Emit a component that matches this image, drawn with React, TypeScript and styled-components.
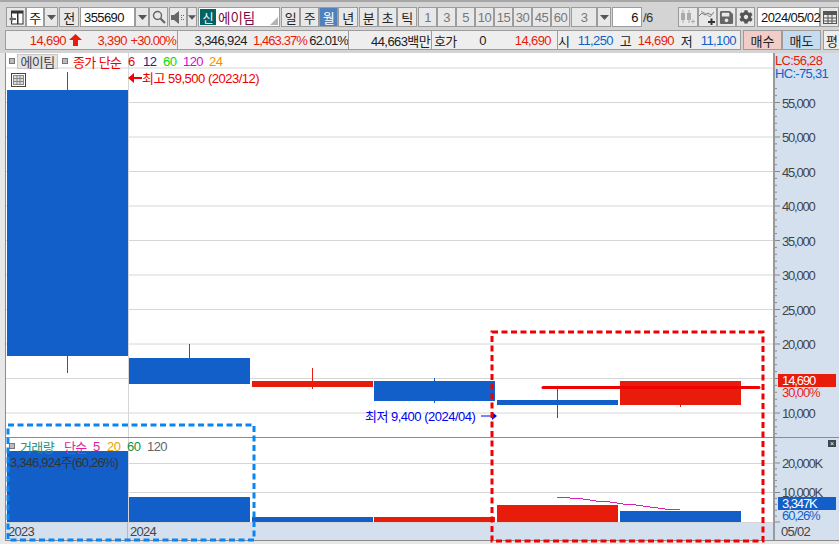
import styled, { createGlobalStyle } from "styled-components";
import { FaCog, FaSave } from "react-icons/fa";

const FONT = `"Liberation Sans", "Noto Sans CJK KR", sans-serif`;
const RED = "#e81c0a";
const BLUE = "#135fc9";
const AXIS_BG = "#d5e0ef";
const GRID = "#d6d6d6";

const candles = [
    { x: 7, w: 121, top: 90, bottom: 356, wickTop: 72, wickBottom: 373, up: false },
    { x: 129, w: 121, top: 358, bottom: 384, wickTop: 344, wickBottom: 384, up: false },
    { x: 252, w: 121, top: 381, bottom: 387, wickTop: 368, wickBottom: 389, up: true },
    { x: 374, w: 121, top: 381, bottom: 401, wickTop: 378, wickBottom: 403, up: false },
    { x: 497, w: 121, top: 400, bottom: 405, wickTop: 388, wickBottom: 418, up: false },
    { x: 620, w: 121, top: 381, bottom: 405, wickTop: 381, wickBottom: 407, up: true },
];

const volumes = [
    { x: 7, top: 451, up: false },
    { x: 129, top: 497, up: false },
    { x: 252, top: 517, up: false },
    { x: 374, top: 517, up: true },
    { x: 497, top: 505, up: true },
    { x: 620, top: 511, up: false },
];

const priceLabels = [55000, 50000, 45000, 40000, 35000, 30000, 25000, 20000, 15000, 10000];
const priceY = (price: number) => 413 - ((price - 10000) / 5000) * 34.5;

const GlobalStyle = createGlobalStyle`
    html, body {
        margin : 0;
        padding : 0;
        background : #d4d4d4;
    }
`;

const Page = styled.div`
    position : relative;
    width : 839px;
    height : 544px;
    overflow : hidden;
    display : flex;
    flex-direction : column;
    background : #d4d4d4;
    border-top : 2px solid #a6a6a6;
    box-sizing : border-box;
    font-family : ${FONT};
    font-size : 13px;
`;

const Toolbar = styled.div`
    display : flex;
    align-items : stretch;
    height : 20px;
    margin : 5px 0 0 6px;
`;

const ToolButton = styled.div<{ $w : number; $active? : boolean; $muted? : boolean; $gap? : number; $lead? : number }>`
    width : ${({ $w }) => $w}px;
    flex : none;
    margin-left : ${({ $lead }) => $lead ?? 0}px;
    margin-right : ${({ $gap }) => $gap ?? 0}px;
    box-sizing : border-box;
    display : flex;
    align-items : center;
    justify-content : center;
    border : 1px solid #9c9c9c;
    background : ${({ $active }) => ($active ? "#4f81bd" : "#e8e8e8")};
    color : ${({ $active, $muted }) => ($active ? "#fff" : $muted ? "#777" : "#222")};
    font-size : 13px;
    letter-spacing : -0.5px;
`;

const WhiteField = styled.div<{ $w : number; $align? : string; $gap? : number }>`
    width : ${({ $w }) => $w}px;
    flex : none;
    margin-right : ${({ $gap }) => $gap ?? 0}px;
    box-sizing : border-box;
    display : flex;
    align-items : center;
    justify-content : ${({ $align }) => $align ?? "flex-start"};
    padding : 0 3px;
    border : 1px solid #9c9c9c;
    background : #fff;
    color : #111;
    font-size : 13px;
    letter-spacing : -0.6px;
`;

const NameField = styled(WhiteField)`
    position : relative;
    padding : 0 0 0 1px;
    gap : 2px;
    font-size : 13.500px;
    letter-spacing : 0;
    color : #7a0840;
`;

const NewBadge = styled.span`
    width : 16px;
    height : 16px;
    display : flex;
    align-items : center;
    justify-content : center;
    background : #006464;
    color : #fff;
    font-size : 12px;
`;

const CornerMark = styled.span`
    position : absolute;
    right : 1px;
    bottom : 1px;
    width : 0;
    height : 0;
    border-left : 8px solid transparent;
    border-bottom : 8px solid #b4b4b4;
`;

const PageCount = styled.div`
    width : 35px;
    flex : none;
    display : flex;
    align-items : center;
    padding-left : 1px;
    color : #333;
    font-size : 13px;
    letter-spacing : -0.5px;
`;

const InfoBar = styled.div`
    display : flex;
    align-items : stretch;
    height : 20px;
    margin : 3px 0 0 5px;
`;

const InfoGroup = styled.div<{ $w : number; $gap? : number; $bg? : string; $center? : boolean; $flush? : boolean }>`
    width : ${({ $w }) => $w}px;
    flex : none;
    margin-left : ${({ $flush }) => ($flush ? 0 : -1)}px;
    margin-right : ${({ $gap }) => $gap ?? 0}px;
    box-sizing : border-box;
    display : flex;
    align-items : center;
    justify-content : ${({ $center }) => ($center ? "center" : "flex-start")};
    border : 1px solid #9c9c9c;
    background : ${({ $bg }) => $bg ?? "#eeeeee"};
    color : #222;
`;

const InfoText = styled.span<{ $w : number; $color? : string; $left? : boolean; $tight? : boolean }>`
    width : ${({ $w }) => $w}px;
    flex : none;
    box-sizing : border-box;
    padding-left : ${({ $left }) => ($left ? 2 : 0)}px;
    text-align : ${({ $left }) => ($left ? "left" : "right")};
    color : ${({ $color }) => $color ?? "#222"};
    font-size : 13px;
    letter-spacing : ${({ $tight }) => ($tight ? -0.9 : -0.6)}px;
    white-space : nowrap;
`;

const UpArrow = styled.svg`
    margin-left : 3px;
    flex : none;
`;

const ChartFrame = styled.div`
    margin : 3px 0 0 5px;
    display : flex;
    flex-direction : column;
    border-left : 1px solid #8c8c8c;
    background : #fff;
    height : 488px;
    flex : none;
    box-shadow : -5px 0 0 #e8e8e8;
`;

const Panel = styled.div<{ $h : number; $line? : boolean }>`
    position : relative;
    display : flex;
    height : ${({ $h }) => $h}px;
    flex : none;
    border-bottom : ${({ $line }) => ($line ? "1px solid #8c8c8c" : "none")};
    box-sizing : border-box;
`;

const PlotSvg = styled.svg`
    display : block;
    width : 767px;
    height : 100%;
    flex : none;
`;

const AxisSvg = styled.svg`
    display : block;
    width : 66px;
    height : 100%;
    flex : none;
    background : ${AXIS_BG};
    border-left : 2px solid #9a9a9a;
    box-sizing : border-box;
`;

const AxisLabel = styled.text`
    font-family : ${FONT};
    font-size : 13px;
    letter-spacing : -1.2px;
    fill : #444;
`;

const LegendRow = styled.div`
    position : absolute;
    left : 3px;
    top : 0;
    height : 16px;
    display : flex;
    align-items : center;
    font-size : 13px;
    letter-spacing : -0.6px;
`;

const LegendText = styled.span<{ $color : string; $w : number; $lead? : number }>`
    width : ${({ $w }) => $w}px;
    flex : none;
    margin-left : ${({ $lead }) => $lead ?? 0}px;
    color : ${({ $color }) => $color};
    white-space : nowrap;
`;

const Bullet = styled.span`
    width : 4px;
    height : 4px;
    flex : none;
    border : 1px solid #777;
    background : #bbb;
    margin-right : 2px;
`;

const NameChip = styled.span`
    width : 41px;
    height : 15px;
    flex : none;
    margin-right : 4px;
    display : flex;
    align-items : center;
    justify-content : center;
    background : #e4e4e4;
    border : 1px solid #c8c8c8;
    box-sizing : border-box;
    color : #444;
`;

const TableIcon = styled.svg`
    position : absolute;
    left : 5px;
    top : 20px;
`;

const Callout = styled.div<{ $color : string; $left : number; $top : number }>`
    position : absolute;
    left : ${({ $left }) => $left}px;
    top : ${({ $top }) => $top}px;
    display : flex;
    align-items : center;
    color : ${({ $color }) => $color};
    font-size : 13px;
    letter-spacing : -0.5px;
    white-space : nowrap;
`;

const LowArrow = styled.svg`
    margin-left : 6px;
    flex : none;
`;

const SubLegend = styled.div`
    position : absolute;
    left : 4px;
    top : 14px;
    color : #333;
    font-size : 13px;
    letter-spacing : -0.8px;
    white-space : nowrap;
`;

const AxisTag = styled.div<{ $top : number; $bg : string }>`
    position : absolute;
    left : 772px;
    top : ${({ $top }) => $top}px;
    width : 58px;
    height : 13px;
    padding-left : 4px;
    box-sizing : border-box;
    display : flex;
    align-items : center;
    background : ${({ $bg }) => $bg};
    color : #fff;
    font-size : 13px;
    letter-spacing : -1.1px;
`;

const AxisNote = styled.div<{ $top : number; $color : string; $left? : number; $tight? : boolean }>`
    position : absolute;
    left : ${({ $left }) => $left ?? 776}px;
    top : ${({ $top }) => $top}px;
    line-height : 13px;
    color : ${({ $color }) => $color};
    font-size : 13px;
    letter-spacing : ${({ $tight }) => ($tight ? -1.1 : -0.7)}px;
`;

const CloseChip = styled.div`
    position : absolute;
    left : 822px;
    top : 2px;
    width : 8px;
    height : 7px;
    background : #444;
    color : #fff;
    font-size : 7px;
    line-height : 7px;
    text-align : center;
`;

const DateRow = styled.div`
    display : flex;
    height : 18px;
    flex : none;
    background : ${AXIS_BG};
    border-bottom : 1px solid #8c8c8c;
    box-sizing : border-box;
    color : #444;
    letter-spacing : -0.7px;
`;

const DateCell = styled.div<{ $w : number; $line? : boolean }>`
    width : ${({ $w }) => $w}px;
    flex : none;
    box-sizing : border-box;
    padding-left : 2px;
    line-height : 17px;
    border-right : ${({ $line }) => ($line ? `1px solid #b8b8b8` : "none")};
`;

const AxisDate = styled.div`
    width : 66px;
    flex : none;
    box-sizing : border-box;
    padding-left : 6px;
    line-height : 17px;
    border-left : 2px solid #9a9a9a;
`;

const FooterStrip = styled.div`
    flex : 1;
    background : #e8e8e8;
`;

const Overlay = styled.svg`
    position : absolute;
    left : 0;
    top : -2px;
    pointer-events : none;
`;

function Caret() {
    return (
        <svg width="9" height="5" viewBox="0 0 9 5">
            <path d="M0 0h9L4.5 5z" fill="#555" />
        </svg>
    );
}

function Toolbox() {
    return (
        <Toolbar>
            <ToolButton $w={20}>
                <svg width="15" height="15" viewBox="0 0 15 15">
                    <rect x="2.500" y="1" width="11.500" height="13" fill="#fff" stroke="#333" />
                    <rect x="2" y="1" width="12" height="2.500" fill="#333" />
                    <rect x="8" y="1" width="1.500" height="13" fill="#333" />
                    <path d="M0 9l3.500-3v2H7v2H3.500v2z" fill="#666" />
                </svg>
            </ToolButton>
            <WhiteField $w={18} $align="center">주</WhiteField>
            <ToolButton $w={14} $gap={1}><Caret /></ToolButton>
            <ToolButton $w={20} $gap={1}>전</ToolButton>
            <WhiteField $w={55}>355690</WhiteField>
            <ToolButton $w={14}><Caret /></ToolButton>
            <ToolButton $w={19} $gap={1}>
                <svg width="14" height="14" viewBox="0 0 14 14" fill="none" stroke="#666">
                    <circle cx="5.5" cy="5.5" r="4" strokeWidth="1.4" />
                    <path d="M8.5 8.5L13 13" strokeWidth="2.2" />
                </svg>
            </ToolButton>
            <ToolButton $w={18}>
                <svg width="14" height="13" viewBox="0 0 14 13">
                    <path d="M0 4h3l5-4v13L3 9H0z" fill="#666" />
                    <path d="M10 4h1v1h-1zM12 4h1v1h-1zM10 8h1v1h-1zM12 8h1v1h-1zM10 6h1v1h-1z" fill="#666" />
                </svg>
            </ToolButton>
            <ToolButton $w={10} $gap={1}><Caret /></ToolButton>
            <NameField $w={82} $gap={1}>
                <NewBadge>신</NewBadge>
                에이팀
                <CornerMark />
            </NameField>
            <ToolButton $w={19}>일</ToolButton>
            <ToolButton $w={19}>주</ToolButton>
            <ToolButton $w={19} $active>월</ToolButton>
            <ToolButton $w={20} $gap={1}>년</ToolButton>
            <ToolButton $w={19}>분</ToolButton>
            <ToolButton $w={19}>초</ToolButton>
            <ToolButton $w={20} $gap={1}>틱</ToolButton>
            {["1", "3", "5", "10", "15", "30", "45", "60"].map((n) => (
                <ToolButton key={n} $w={19} $muted>{n}</ToolButton>
            ))}
            <ToolButton $w={26} $muted $lead={1}>3</ToolButton>
            <ToolButton $w={14} $gap={1}><Caret /></ToolButton>
            <WhiteField $w={30} $align="flex-end">6</WhiteField>
            <PageCount>/6</PageCount>
            <ToolButton $w={20}>
                <svg width="16" height="14" viewBox="0 0 16 14" fill="#aaa">
                    <rect x="1" y="3" width="4" height="7" />
                    <rect x="2.5" y="0" width="1" height="13" />
                    <rect x="7" y="3" width="4" height="7" />
                    <rect x="8.5" y="0" width="1" height="13" />
                    <path d="M11 11h4v1h-4zM12.5 9.500h1v4h-1z" />
                </svg>
            </ToolButton>
            <ToolButton $w={19}>
                <svg width="17" height="15" viewBox="0 0 17 15" fill="none">
                    <path d="M0 6l3-3 3 2 3-2 3 2 3-3" stroke="#777" />
                    <path d="M2 1l5 3 4 3 4-5" stroke="#999" />
                    <path d="M9 11h7v2H9zM11.500 8.500h2v7h-2z" fill="#333" />
                </svg>
            </ToolButton>
            <ToolButton $w={19}><FaSave size={15} color="#666" /></ToolButton>
            <ToolButton $w={19} $gap={2}><FaCog size={14} color="#555" /></ToolButton>
            <WhiteField $w={63}>2024/05/02</WhiteField>
            <ToolButton $w={19}>
                <svg width="14" height="13" viewBox="0 0 14 13" fill="none" stroke="#555">
                    <rect x="0.500" y="0.500" width="13" height="12" />
                    <rect x="0.500" y="0.500" width="13" height="3" fill="#555" />
                    <path d="M0 7h14M0 10h14M5 4v9M9 4v9" />
                </svg>
            </ToolButton>
        </Toolbar>
    );
}

function QuoteBar() {
    return (
        <InfoBar>
            <InfoGroup $w={173} $flush>
                <InfoText $w={60} $color={RED}>14,690</InfoText>
                <UpArrow width="13" height="12" viewBox="0 0 13 12">
                    <path d="M6.500 0L13 6H9v6H4V6H0z" fill={RED} />
                </UpArrow>
                <InfoText $w={45} $color={RED}>3,390</InfoText>
                <InfoText $w={49} $color={RED} $tight>+30.00%</InfoText>
            </InfoGroup>
            <InfoGroup $w={172}>
                <InfoText $w={69}>3,346,924</InfoText>
                <InfoText $w={60} $color={RED} $tight>1,463.37%</InfoText>
                <InfoText $w={41} $tight>62.01%</InfoText>
            </InfoGroup>
            <InfoGroup $w={84}>
                <InfoText $w={81}>44,663백만</InfoText>
            </InfoGroup>
            <InfoGroup $w={127}>
                <InfoText $w={26} $left>호가</InfoText>
                <InfoText $w={28}>0</InfoText>
                <InfoText $w={65} $color={RED}>14,690</InfoText>
            </InfoGroup>
            <InfoGroup $w={184} $gap={2}>
                <InfoText $w={11}>시</InfoText>
                <InfoText $w={44} $color={BLUE}>11,250</InfoText>
                <InfoText $w={18}>고</InfoText>
                <InfoText $w={43} $color={RED}>14,690</InfoText>
                <InfoText $w={18}>저</InfoText>
                <InfoText $w={44} $color={BLUE}>11,100</InfoText>
            </InfoGroup>
            <InfoGroup $w={39} $bg="#f2ccc6" $center $flush>매수</InfoGroup>
            <InfoGroup $w={39} $bg="#c5dcf0" $center $flush $gap={2}>매도</InfoGroup>
            <InfoGroup $w={18} $center $flush>평</InfoGroup>
        </InfoBar>
    );
}

function PricePlot() {
    return (
        <PlotSvg viewBox="6 53 767 384" preserveAspectRatio="none">
            {[60000, ...priceLabels].map((p) => (
                <line key={p} x1="6" x2="773" y1={priceY(p)} y2={priceY(p)} stroke={GRID} strokeWidth="1" />
            ))}
            <line x1="128.500" x2="128.500" y1="53" y2="437" stroke={GRID} />
            {candles.map((c) => {
                const color = c.up ? RED : BLUE;
                const mid = Math.floor(c.x + c.w / 2) + 0.5;
                return (
                    <g key={c.x}>
                        <line x1={mid} x2={mid} y1={c.wickTop} y2={c.wickBottom} stroke={color} />
                        <rect x={c.x} y={c.top} width={c.w} height={c.bottom - c.top} fill={color} />
                    </g>
                );
            })}
        </PlotSvg>
    );
}

function PriceAxis() {
    const ticks = Array.from({ length: 53 }, (_, i) => 5000 + i * 1000);
    return (
        <AxisSvg viewBox="775 53 64 384" preserveAspectRatio="none">
            {ticks.map((t) => {
                const major = t % 5000 === 0;
                return <line key={t} x1="775" x2={major ? 780 : 777} y1={priceY(t)} y2={priceY(t)} stroke="#888" />;
            })}
            {priceLabels.map((p) => (
                <AxisLabel key={p} x="782" y={priceY(p) + 5}>{p.toLocaleString("en-US")}</AxisLabel>
            ))}
        </AxisSvg>
    );
}

function VolumePlot() {
    return (
        <PlotSvg viewBox="6 438 767 85" preserveAspectRatio="none">
            {[463, 492, 522].map((y) => (
                <line key={y} x1="6" x2="773" y1={y + 0.5} y2={y + 0.5} stroke={GRID} />
            ))}
            <line x1="128.500" x2="128.500" y1="438" y2="523" stroke={GRID} />
            {volumes.map((v) => (
                <rect key={v.x} x={v.x} y={v.top} width="121" height={522 - v.top} fill={v.up ? RED : BLUE} />
            ))}
            <polyline
                points="557,497 570,498 583,499 596,501 610,502 623,504 636,505 650,507 665,509 680,510"
                fill="none"
                stroke="#d820b8"
                strokeWidth="1"
                shapeRendering="crispEdges"
            />
        </PlotSvg>
    );
}

function VolumeAxis() {
    const ticks = Array.from({ length: 14 }, (_, i) => 522 - i * 5.9);
    return (
        <AxisSvg viewBox="775 438 64 85" preserveAspectRatio="none">
            {ticks.map((y, i) => (
                <line key={y} x1="775" x2={i % 5 === 0 ? 780 : 777} y1={y} y2={y} stroke="#888" />
            ))}
            <AxisLabel x="782" y="468">20,000K</AxisLabel>
            <AxisLabel x="782" y="497">10,000K</AxisLabel>
        </AxisSvg>
    );
}

function App() {
    return (
        <Page>
            <GlobalStyle />
            <Toolbox />
            <QuoteBar />
            <ChartFrame>
                <Panel $h={385} $line>
                    <PricePlot />
                    <PriceAxis />
                    <LegendRow>
                        <Bullet />
                        <NameChip>에이팀</NameChip>
                        <Bullet />
                        <LegendText $color="#f00000" $w={55} $lead={3}>종가 단순</LegendText>
                        <LegendText $color="#f00000" $w={15}>6</LegendText>
                        <LegendText $color="#102a90" $w={20}>12</LegendText>
                        <LegendText $color="#00e000" $w={20}>60</LegendText>
                        <LegendText $color="#e000e0" $w={26}>120</LegendText>
                        <LegendText $color="#f09000" $w={16}>24</LegendText>
                    </LegendRow>
                    <TableIcon width="15" height="14" viewBox="0 0 15 14" fill="none" stroke="#444">
                        <rect x="0.500" y="0.500" width="14" height="13" />
                        <rect x="2.500" y="2.500" width="10" height="9" fill="#ddd" stroke="#888" />
                        <path d="M2 5.500h11M2 8.500h11M6 2v10M9 2v10" stroke="#888" />
                    </TableIcon>
                    <Callout $color="#f00000" $left={122} $top={15}>
                        <svg width="14" height="10" viewBox="0 0 14 10">
                            <path d="M0 5l6-5v4h8v2H6v4z" fill="#f00000" />
                        </svg>
                        최고 59,500 (2023/12)
                    </Callout>
                    <Callout $color="#0000f0" $left={359} $top={353}>
                        최저 9,400 (2024/04)
                        <LowArrow width="16" height="10" viewBox="0 0 16 10">
                            <path d="M0 4.500h11V1l5 4-5 4V5.500H0z" fill="#0000f0" />
                        </LowArrow>
                    </Callout>
                    <AxisNote $top={1} $color="#e81c0a" $left={769}>LC:56,28</AxisNote>
                    <AxisNote $top={14} $color="#135fc9" $left={769}>HC:-75,31</AxisNote>
                    <AxisTag $top={321} $bg={RED}>14,690</AxisTag>
                    <AxisNote $top={333} $color="#f02010" $tight>30,00%</AxisNote>
                </Panel>
                <Panel $h={85}>
                    <VolumePlot />
                    <VolumeAxis />
                    <LegendRow>
                        <Bullet />
                        <LegendText $color="#2a9080" $w={44} $lead={3}>거래량</LegendText>
                        <LegendText $color="#e020a0" $w={29}>단순</LegendText>
                        <LegendText $color="#e020a0" $w={14}>5</LegendText>
                        <LegendText $color="#f0a000" $w={20}>20</LegendText>
                        <LegendText $color="#109040" $w={20}>60</LegendText>
                        <LegendText $color="#666" $w={26}>120</LegendText>
                    </LegendRow>
                    <SubLegend>3,346,924주(60,26%)</SubLegend>
                    <CloseChip>×</CloseChip>
                    <AxisTag $top={59} $bg={BLUE}>3,347K</AxisTag>
                    <AxisNote $top={71} $color="#135fc9" $tight>60,26%</AxisNote>
                </Panel>
                <DateRow>
                    <DateCell $w={122} $line>2023</DateCell>
                    <DateCell $w={645}>2024</DateCell>
                    <AxisDate>05/02</AxisDate>
                </DateRow>
            </ChartFrame>
            <FooterStrip />
            <Overlay width="839" height="544" viewBox="0 0 839 544" fill="none">
                <line x1="543" x2="759" y1="387.500" y2="387.500" stroke="#f00000" strokeWidth="3" strokeLinecap="round" />
                <rect x="492" y="332" width="271" height="209" stroke="#f00000" strokeWidth="3" strokeDasharray="6 3.500" />
                <rect x="8" y="425" width="246" height="115" stroke="#0a84f0" strokeWidth="3" strokeDasharray="6 3.500" />
            </Overlay>
        </Page>
    );
}

export default App;
